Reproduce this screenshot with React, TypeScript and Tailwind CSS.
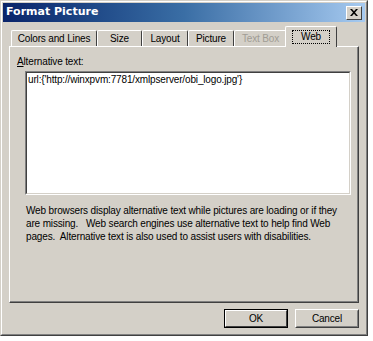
import React from "react"

const tabs = [
  { label: "Colors and Lines", w: 86 },
  { label: "Size", w: 45 },
  { label: "Layout", w: 46 },
  { label: "Picture", w: 46 },
  { label: "Text Box", w: 53, disabled: true },
  { label: "Web", w: 48, selected: true },
]

const Tab = ({ label, w, disabled, selected }: { label: string; w: number; disabled?: boolean; selected?: boolean }) => {
  if (selected) {
    return (
      <div
        className="relative z-10 -mx-[2px] h-[21px] bg-[#d4d0c8] border-l border-t border-white border-r border-r-[#404040] rounded-t-[2px] flex items-center justify-center -mb-[1px]"
        style={{ width: w + 4 }}
      >
        <span className="border border-dotted border-black px-[8px] leading-[12px]">{label}</span>
      </div>
    )
  }
  return (
    <div
      className="h-[16px] bg-[#d4d0c8] border-l border-t border-white border-r border-r-[#404040] rounded-t-[2px] flex items-center justify-center"
      style={{ width: w }}
    >
      <span className={disabled ? "text-[#a09c94]" : "text-black"}>{label}</span>
    </div>
  )
}

export default function App() {
  return (
    <div className="w-[373px] h-[341px] bg-white text-[10px] tracking-[-0.15px] text-black" style={{ fontFamily: '"Liberation Sans", Arial, sans-serif' }}>
      <div className="w-[368px] h-[336px] bg-[#d4d0c8] border border-t-[#d4d0c8] border-l-[#d4d0c8] border-r-[#404040] border-b-[#404040]">
        <div className="h-full border border-t-white border-l-white border-r-[#808080] border-b-[#808080] px-[1px] pt-[1px] flex flex-col">
          <div className="h-[19px] flex items-center justify-between pl-[3px] pr-[3px] bg-gradient-to-r from-[#0a246a] via-[#3a6ea5] to-[#a6caf0]">
            <span className="text-white font-bold text-[11px] tracking-normal" style={{ fontFamily: '"DejaVu Sans", sans-serif' }}>Format Picture</span>
            <div className="w-[16px] h-[14px] bg-[#d4d0c8] border border-t-white border-l-white border-r-[#404040] border-b-[#404040] flex items-center justify-center">
              <svg width="8" height="7" viewBox="0 0 8 7">
                <path d="M0 0h2l2 2.2L6 0h2L5 3.5 8 7H6L4 4.8 2 7H0l3-3.5z" fill="#000" />
              </svg>
            </div>
          </div>

          <div className="flex-1 px-[6px] pt-[4px] flex flex-col">
            <div className="flex items-end h-[20px] pl-[2px]">
              {tabs.map(t => (
                <Tab key={t.label} {...t} />
              ))}
            </div>
            <div className="relative h-[257px] w-[350px] border-l border-t border-white border-r border-b border-r-[#404040] border-b-[#404040]">
              <div className="h-full border-r border-b border-[#808080] pl-[7px] pt-[9px]">
                <div className="leading-[12px] mb-[3px]">
                  <span className="underline">A</span>lternative text:
                </div>
                <div className="ml-[8px] w-[326px] h-[124px] border border-t-[#808080] border-l-[#808080] border-r-white border-b-white">
                  <div className="h-full bg-white border border-t-[#404040] border-l-[#404040] border-r-[#d4d0c8] border-b-[#d4d0c8] px-[1px] pt-[1px] leading-[12px]">
                    url:{"{'http://winxpvm:7781/xmlpserver/obi_logo.jpg'}"}
                  </div>
                </div>
                <p className="mt-[9px] ml-[9px] leading-[13px]">
                  Web browsers display alternative text while pictures are loading or if they
                  <br />
                  are missing.&nbsp;&nbsp; Web search engines use alternative text to help find Web
                  <br />
                  pages.&nbsp; Alternative text is also used to assist users with disabilities.
                </p>
              </div>
            </div>

            <div className="flex justify-end gap-[7px] pt-[6px]">
              <button className="w-[64px] h-[19px] border border-black bg-[#d4d0c8]">
                <div className="h-full border border-t-white border-l-white border-r-[#404040] border-b-[#404040] flex items-center justify-center">OK</div>
              </button>
              <button className="w-[64px] h-[19px] bg-[#d4d0c8] border border-t-white border-l-white border-r-[#404040] border-b-[#404040]">
                <div className="h-full border border-transparent border-r-[#808080] border-b-[#808080] flex items-center justify-center">Cancel</div>
              </button>
            </div>
          </div>
        </div>
      </div>
    </div>
  )
}
